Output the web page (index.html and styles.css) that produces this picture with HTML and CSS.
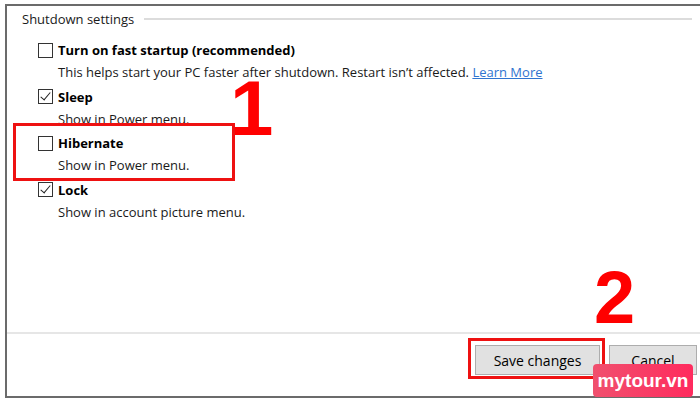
FILE: index.html
```html
<!DOCTYPE html>
<html lang="en">

<head>
    <meta charset="UTF-8">
    <title>Shutdown settings</title>
    <link rel="stylesheet" href="styles.css">
</head>

<body>
    <div class="window">
        <div class="content">
            <div class="group-title">
                <span>Shutdown settings</span>
                <div class="group-line"></div>
            </div>

            <div class="option">
                <div class="option-head">
                    <span class="box"></span>
                    <span class="label">Turn on fast startup (recommended)</span>
                </div>
                <div class="option-desc">This helps start your PC faster after shutdown. Restart isn’t affected. <a href="#">Learn More</a></div>
            </div>

            <div class="option">
                <div class="option-head">
                    <span class="box checked"></span>
                    <span class="label">Sleep</span>
                </div>
                <div class="option-desc">Show in Power menu.</div>
            </div>

            <div class="option">
                <div class="option-head">
                    <span class="box"></span>
                    <span class="label">Hibernate</span>
                </div>
                <div class="option-desc">Show in Power menu.</div>
            </div>

            <div class="option">
                <div class="option-head">
                    <span class="box checked"></span>
                    <span class="label">Lock</span>
                </div>
                <div class="option-desc">Show in account picture menu.</div>
            </div>
        </div>

        <div class="footer">
            <button class="btn">Save changes</button>
            <button class="btn cancel">Cancel</button>
        </div>
    </div>

    <!-- annotations drawn over the screenshot -->
    <div class="mark mark-hibernate"></div>
    <div class="mark mark-save"></div>
    <div class="step step-1">1</div>
    <div class="step step-2">2</div>
    <div class="badge">mytour.vn</div>
</body>

</html>
```

FILE: styles.css
```css
body {
    margin: 0;
    background-color: #FFFFFF;
    color: #000000;
    font-family: "Open Sans", "Noto Sans", sans-serif;
    font-size: 13px;
    overflow: hidden;
}

.window {
    margin: 4px 0 0 5px;
    height: 390px;
    border-top: 2px solid #6b6b6b;
    border-left: 2px solid #6b6b6b;
    border-bottom: 2px solid #6b6b6b;
    display: flex;
    flex-direction: column;
}

.content {
    flex: 1;
    padding: 2px 0 0 15px;
}

.group-title {
    display: flex;
    align-items: center;
    line-height: 22px;
    color: #1a1a1a;
}

.group-line {
    flex: 1;
    height: 2px;
    background-color: #dcdcdc;
    margin: 0 8px 0 10px;
}

.option {
    margin-left: 16px;
    margin-bottom: 2.5px;
}

.group-title + .option {
    margin-top: 9px;
}

.option-head {
    display: flex;
    align-items: center;
    line-height: 22px;
}

.box {
    width: 13px;
    height: 13px;
    border: 1px solid #333333;
    background-color: #FFFFFF;
    margin-right: 5px;
    position: relative;
}

.box.checked::after {
    content: "";
    position: absolute;
    left: 4px;
    top: 0px;
    width: 4px;
    height: 9px;
    border-right: 1.5px solid #222222;
    border-bottom: 1.5px solid #222222;
    transform: rotate(40deg);
}

.label {
    font-weight: bold;
}

.option-desc {
    line-height: 22px;
    padding-left: 20px;
    color: #1a1a1a;
}

.option-desc a {
    color: #2f74d0;
}

.footer {
    box-sizing: border-box;
    height: 64px;
    border-top: 2px solid #e6e6e6;
    display: flex;
    justify-content: flex-end;
    align-items: flex-start;
    padding-top: 11px;
    gap: 9px;
}

.btn {
    font-family: inherit;
    font-size: 14px;
    background-color: #e1e1e1;
    border: 1px solid #adadad;
    height: 30px;
    color: #000000;
    width: 125px;
}

.btn.cancel {
    width: 88px;
    margin-right: 3px;
}

.mark {
    position: absolute;
    border: 3px solid #ee1111;
}

.mark-hibernate {
    left: 13px;
    top: 123px;
    width: 216px;
    height: 52px;
}

.mark-save {
    left: 468px;
    top: 338px;
    width: 131px;
    height: 35px;
}

.step {
    position: absolute;
    color: #ff0000;
    font-family: "Liberation Sans", Arial, sans-serif;
    font-weight: bold;
    line-height: 0.6;
}

.step-1 {
    left: 230px;
    top: 85px;
    font-size: 78px;
}

.step-2 {
    left: 594px;
    top: 276px;
    font-size: 74px;
}

.badge {
    position: absolute;
    left: 593px;
    top: 364px;
    width: 100px;
    height: 33px;
    border-radius: 4px;
    background: linear-gradient(90deg, #f0506e, #ff2b5e);
    color: #FFFFFF;
    font-family: "Liberation Sans", Arial, sans-serif;
    font-weight: bold;
    font-size: 19px;
    line-height: 33px;
    text-align: center;
}
```
